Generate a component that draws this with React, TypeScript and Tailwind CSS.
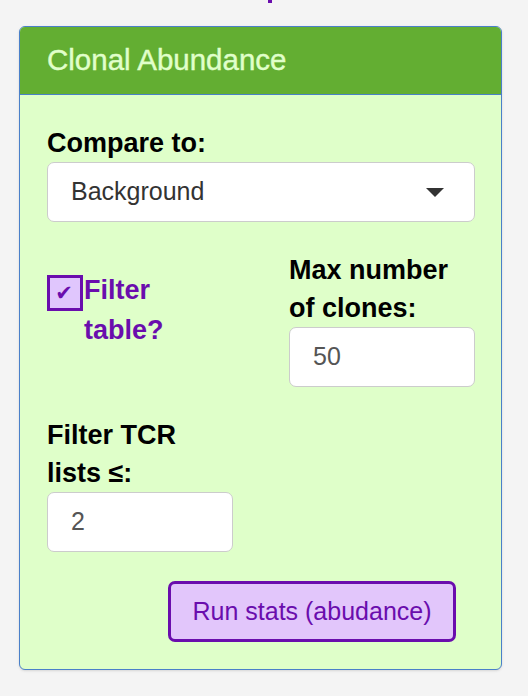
const purple = "text-[#6a0dad]";

function NumberBox({ value }: { value: string }) {
  return (
    <div className="flex h-[60px] w-[186px] items-center rounded-[7px] border border-[#cccccc] bg-white px-[23px] text-[25px] text-[#555555]">
      {value}
    </div>
  );
}

export default function App() {
  return (
    <div className="min-h-screen w-[528px] bg-[#f4f4f4] font-['Liberation_Sans',Arial,sans-serif]">
      {/* tail of the heading that sits above the panel */}
      <div className="ml-[268px] h-[3px] w-[4px] bg-[#6a0dad]" />

      <div className="ml-[19px] mt-[23px] w-[483px] overflow-hidden rounded-[6px] border border-[#4a80c9] bg-[#dfffc9] shadow-sm">
        <div className="flex h-[68px] items-center border-b border-[#4a80c9] bg-[#63ae32] pl-[27px] text-[29.5px] text-[#e0ffca] [-webkit-text-stroke:0.4px_#e0ffca]">
          Clonal Abundance
        </div>

        <div className="pb-[27px] pl-[27px] pr-[26px] pt-[29px]">
          <div className="mb-[29px]">
            <div className="text-[27px] font-bold leading-[38px] text-black">Compare to:</div>
            <div className="flex h-[60px] items-center justify-between rounded-[7px] border border-[#cccccc] bg-white pl-[23px] pr-[30px] text-[25px] text-[#333333]">
              <span>Background</span>
              <span className="h-0 w-0 border-x-[9px] border-t-[9px] border-x-transparent border-t-[#333333]" />
            </div>
          </div>

          <div className="mb-[29px] grid grid-cols-[242px_186px]">
            <div className="mt-[19px] flex items-start">
              <span className="mt-[5px] flex h-[36px] w-[36px] shrink-0 items-center justify-center border-[3px] border-[#6a0dad] bg-[#e0c6fd] pr-[2px] font-['DejaVu_Sans',sans-serif] text-[21px] leading-none text-[#6a0dad]">
                ✔
              </span>
              <span className={`ml-[1px] text-[27px] font-bold leading-[40px] ${purple}`}>
                Filter
                <br />
                table?
              </span>
            </div>
            <div>
              <div className="text-[27px] font-bold leading-[38px] text-black">
                Max number
                <br />
                of clones:
              </div>
              <NumberBox value="50" />
            </div>
          </div>

          <div className="mb-[29px]">
            <div className="text-[27px] font-bold leading-[38px] text-black">
              Filter TCR
              <br />
              lists ≤:
            </div>
            <NumberBox value="2" />
          </div>

          <button
            className={`ml-[121px] flex h-[61px] w-[288px] items-center justify-center rounded-[7px] border-[3px] border-[#6a0dad] bg-[#e2c6fb] text-[25px] ${purple}`}
          >
            Run stats (abudance)
          </button>
        </div>
      </div>
    </div>
  );
}
